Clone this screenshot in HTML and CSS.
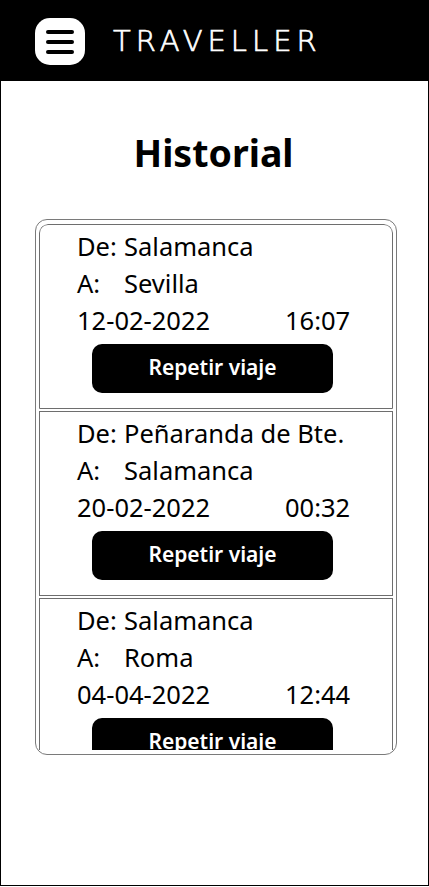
FILE: index.html
```html
<!DOCTYPE html>
<html lang="es">
<head>
<meta charset="utf-8">
<title>Traveller - Historial</title>
<link rel="stylesheet" href="styles.css">
</head>
<body>
<div class="app">
  <header class="header">
    <div class="logo" aria-label="Menú">
      <span class="bar"></span>
      <span class="bar"></span>
      <span class="bar"></span>
    </div>
    <div class="brand">TRAVELLER</div>
  </header>
  <main class="main">
    <h1 class="title">Historial</h1>
    <section class="history">
      <div class="scroll">
        <article class="trip">
          <div class="line"><span class="label">De:</span>Salamanca</div>
          <div class="line"><span class="label">A:</span>Sevilla</div>
          <div class="line"><span class="date">12-02-2022</span>16:07</div>
          <button class="repeat">Repetir viaje</button>
        </article>
        <article class="trip">
          <div class="line"><span class="label">De:</span>Peñaranda de Bte.</div>
          <div class="line"><span class="label">A:</span>Salamanca</div>
          <div class="line"><span class="date">20-02-2022</span>00:32</div>
          <button class="repeat">Repetir viaje</button>
        </article>
        <article class="trip">
          <div class="line"><span class="label">De:</span>Salamanca</div>
          <div class="line"><span class="label">A:</span>Roma</div>
          <div class="line"><span class="date">04-04-2022</span>12:44</div>
          <button class="repeat">Repetir viaje</button>
        </article>
      </div>
    </section>
  </main>
</div>
</body>
</html>
```
FILE: styles.css
```css
* { box-sizing: border-box; }

html, body {
  margin: 0;
  padding: 0;
  background: #fff;
}

body {
  font-family: "Noto Sans", "Open Sans", sans-serif;
  color: #000;
}

.app {
  width: 429px;
  height: 886px;
  display: flex;
  flex-direction: column;
}

.header {
  height: 81px;
  flex: none;
  background: #000;
  display: flex;
  align-items: center;
  padding-left: 35px;
  gap: 28px;
}

.logo {
  width: 50px;
  height: 47px;
  background: #fff;
  border-radius: 15px;
  display: flex;
  flex-direction: column;
  align-items: center;
  justify-content: center;
  gap: 6px;
  margin-top: 2px;
}

.bar {
  display: block;
  width: 28px;
  height: 4px;
  border-radius: 2px;
  background: #000;
}

.brand {
  color: #fff;
  font-family: "DejaVu Sans", sans-serif;
  font-weight: 200;
  font-size: 29px;
  letter-spacing: 5px;
  line-height: 1;
  margin-top: 2px;
  -webkit-text-stroke: 0.7px #fff;
}

.main {
  flex: 1;
  border: 1px solid #000;
  border-top: none;
  display: flex;
  flex-direction: column;
}

.title {
  margin: 45px 0 0;
  text-align: center;
  font-size: 37.5px;
  font-weight: 700;
  line-height: 53px;
  padding-right: 2px;
}

.history {
  margin: 40px 0 0 34px;
  width: 362px;
  height: 536px;
  border: 1px solid #7a7a7a;
  border-radius: 12px;
  padding: 4px 3px;
}

.scroll {
  height: 100%;
  overflow: hidden;
  display: flex;
  flex-direction: column;
  gap: 2px;
  border-radius: 9px 9px 0 0;
}

.trip {
  flex: none;
  height: 185px;
  border: 1px solid #6e6e6e;
  padding: 3px 0 0 37px;
}

.trip:first-child {
  border-radius: 9px 9px 0 0;
}

.line {
  font-size: 25.5px;
  line-height: 37px;
  white-space: nowrap;
}

.label {
  display: inline-block;
  width: 47px;
}

.date {
  display: inline-block;
  width: 208px;
}

.repeat {
  display: flex;
  align-items: center;
  justify-content: center;
  margin: 5px 0 0 15px;
  width: 241px;
  height: 49px;
  background: #000;
  color: #fff;
  border: none;
  border-radius: 10px;
  font-family: "Noto Sans", "Open Sans", sans-serif;
  font-size: 21px;
  font-weight: 600;
  padding: 0 0 4px;
}
```
